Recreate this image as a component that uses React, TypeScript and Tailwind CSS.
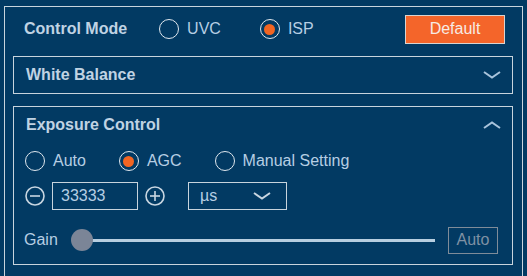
import { useState } from 'react';

const Radio = ({ checked, label, onClick }: { checked: boolean; label: string; onClick: () => void }) => (
  <button onClick={onClick} className="flex items-center gap-[8px] text-[16px] text-[#b6cee3]">
    <span className="w-[20px] h-[20px] rounded-full border-[1.5px] border-[#dfe7ee] flex items-center justify-center">
      {checked && <span className="w-[11px] h-[11px] rounded-full bg-[#f26522]" />}
    </span>
    <span>{label}</span>
  </button>
);

const Chevron = ({ up }: { up?: boolean }) => (
  <svg width="18" height="8" viewBox="0 0 18 8" fill="none" stroke="#a9c4dc" strokeWidth={2}>
    {up ? <polyline points="1,7 9,1.5 17,7" /> : <polyline points="1,1 9,6.5 17,1" />}
  </svg>
);

const RoundIcon = ({ plus }: { plus?: boolean }) => (
  <svg width="20" height="20" viewBox="0 0 20 20" fill="none" stroke="#c9d6e1" strokeWidth={1.6}>
    <circle cx="10" cy="10" r="9" />
    <line x1="5" y1="10" x2="15" y2="10" />
    {plus && <line x1="10" y1="5" x2="10" y2="15" />}
  </svg>
);

export default function App() {
  const [mode, setMode] = useState<'uvc' | 'isp'>('isp');
  const [exp, setExp] = useState<'auto' | 'agc' | 'manual'>('agc');

  return (
    <div className="w-[527px] h-[276px] overflow-hidden bg-[#023a63] px-[4px] pt-[6px] font-['Liberation_Sans',Arial,sans-serif]">
      <div className="border border-[#c8d4dd] pl-[8px] pr-[9px] pb-[20px]">
        {/* header */}
        <div className="h-[44px] flex items-center pl-[11px] pr-[8px]">
          <span className="text-[16px] font-bold text-[#c0d3e3] mr-[32px]">Control Mode</span>
          <Radio checked={mode === 'uvc'} label="UVC" onClick={() => setMode('uvc')} />
          <div className="w-[39px]" />
          <Radio checked={mode === 'isp'} label="ISP" onClick={() => setMode('isp')} />
          <button className="ml-auto w-[100px] h-[29px] bg-[#f4652a] border border-[#d9d4d0] text-[16px] text-[#f7ebe4]">
            Default
          </button>
        </div>

        {/* white balance */}
        <div className="mt-[5px] h-[38px] border border-[#c8d4dd] flex items-center justify-between pl-[12px] pr-[11px]">
          <span className="text-[16px] font-bold text-[#c0d3e3]">White Balance</span>
          <Chevron />
        </div>

        {/* exposure */}
        <div className="mt-[12px] border border-[#c8d4dd] pb-[10px]">
          <div className="h-[36px] flex items-center justify-between pl-[12px] pr-[11px]">
            <span className="text-[16px] font-bold text-[#c0d3e3]">Exposure Control</span>
            <Chevron up />
          </div>

          <div className="mt-[7px] h-[22px] flex items-center pl-[11px] gap-[33px]">
            <Radio checked={exp === 'auto'} label="Auto" onClick={() => setExp('auto')} />
            <Radio checked={exp === 'agc'} label="AGC" onClick={() => setExp('agc')} />
            <Radio checked={exp === 'manual'} label="Manual Setting" onClick={() => setExp('manual')} />
          </div>

          <div className="mt-[10px] h-[28px] flex items-center pl-[11px]">
            <RoundIcon />
            <div className="ml-[7px] w-[86px] h-[28px] border border-[#c8d4dd] flex items-center pl-[8px] text-[16px] text-[#b6cee3]">
              33333
            </div>
            <div className="ml-[7px]">
              <RoundIcon plus />
            </div>
            <div className="ml-[23px] w-[99px] h-[28px] border border-[#c8d4dd] flex items-center justify-between pl-[11px] pr-[15px] text-[16px] text-[#b6cee3]">
              <span>µs</span>
              <svg width="18" height="8" viewBox="0 0 18 8" fill="none" stroke="#c9d6e1" strokeWidth={2}>
                <polyline points="1,1 9,6.5 17,1" />
              </svg>
            </div>
          </div>

          <div className="mt-[16px] h-[28px] flex items-center pl-[10px] pr-[14px]">
            <span className="text-[16px] text-[#b6cee3] w-[47px]">Gain</span>
            <div className="relative flex-1 h-[22px] flex items-center">
              <div className="ml-[11px] flex-1 h-[3px] bg-[#b7cee0]" />
              <div className="absolute left-0 top-0 w-[22px] h-[22px] rounded-full bg-[#7b8597]" />
            </div>
            <button className="ml-[13px] w-[50px] h-[27px] border border-[#7f8c99] text-[16px] text-[#7f91a4]">
              Auto
            </button>
          </div>
        </div>
      </div>
    </div>
  );
}
